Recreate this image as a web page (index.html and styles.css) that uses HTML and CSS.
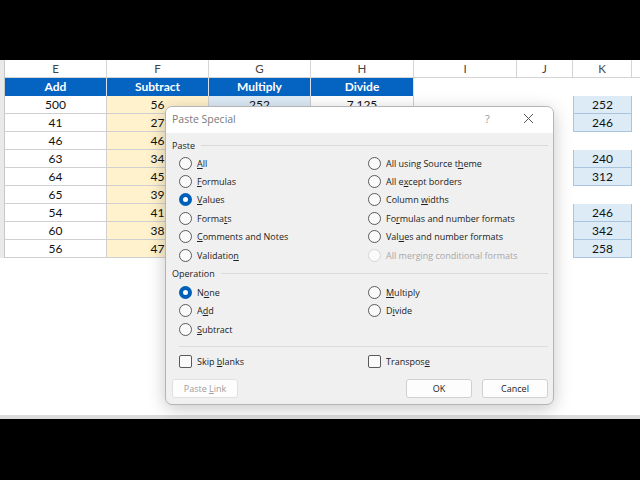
FILE: index.html
```html
<!DOCTYPE html>
<html>
<head>
<meta charset="utf-8">
<link rel="stylesheet" href="styles.css">
</head>
<body>
<div class="screen">
  <div class="sheet">
    <div class="gut hdr"></div>
    <div class="ch">E</div><div class="ch">F</div><div class="ch">G</div><div class="ch">H</div><div class="ch">I</div><div class="ch">J</div><div class="ch">K</div><div class="ch last"></div>

    <div class="gut"></div>
    <div class="t">Add</div><div class="t">Subtract</div><div class="t">Multiply</div><div class="t">Divide</div><div class="e"></div><div class="e"></div><div class="e"></div><div class="e"></div>

    <div class="gut"></div>
    <div class="c">500</div><div class="c y">56</div><div class="c b">252</div><div class="c">7.125</div><div class="e"></div><div class="e"></div><div class="k">252</div><div class="e"></div>
    <div class="gut"></div>
    <div class="c">41</div><div class="c y">27</div><div class="c b"></div><div class="c"></div><div class="e"></div><div class="e"></div><div class="k">246</div><div class="e"></div>
    <div class="gut"></div>
    <div class="c">46</div><div class="c y">46</div><div class="c b"></div><div class="c"></div><div class="e"></div><div class="e"></div><div class="e"></div><div class="e"></div>
    <div class="gut"></div>
    <div class="c">63</div><div class="c y">34</div><div class="c b"></div><div class="c"></div><div class="e"></div><div class="e"></div><div class="k">240</div><div class="e"></div>
    <div class="gut"></div>
    <div class="c">64</div><div class="c y">45</div><div class="c b"></div><div class="c"></div><div class="e"></div><div class="e"></div><div class="k">312</div><div class="e"></div>
    <div class="gut"></div>
    <div class="c">65</div><div class="c y">39</div><div class="c b"></div><div class="c"></div><div class="e"></div><div class="e"></div><div class="e"></div><div class="e"></div>
    <div class="gut"></div>
    <div class="c">54</div><div class="c y">41</div><div class="c b"></div><div class="c"></div><div class="e"></div><div class="e"></div><div class="k">246</div><div class="e"></div>
    <div class="gut"></div>
    <div class="c">60</div><div class="c y">38</div><div class="c b"></div><div class="c"></div><div class="e"></div><div class="e"></div><div class="k">342</div><div class="e"></div>
    <div class="gut"></div>
    <div class="c">56</div><div class="c y">47</div><div class="c b"></div><div class="c"></div><div class="e"></div><div class="e"></div><div class="k">258</div><div class="e"></div>
  </div>
  <div class="tabbar"></div>

  <div class="dialog">
    <div class="titlebar">
      <span class="title">Paste Special</span>
      <span class="help">?</span>
      <span class="close"><svg width="11" height="11" viewBox="0 0 11 11"><path d="M1 1L10 10M10 1L1 10" stroke="#555" stroke-width="1" fill="none"/></svg></span>
    </div>
    <div class="body">
      <div class="group"><span>Paste</span><i></i></div>
      <div class="opts paste">
        <div class="opt"><span class="r"></span><span class="l"><u>A</u>ll</span></div>
        <div class="opt"><span class="r"></span><span class="l">All using Source t<u>h</u>eme</span></div>
        <div class="opt"><span class="r"></span><span class="l"><u>F</u>ormulas</span></div>
        <div class="opt"><span class="r"></span><span class="l">All e<u>x</u>cept borders</span></div>
        <div class="opt"><span class="r on"></span><span class="l"><u>V</u>alues</span></div>
        <div class="opt"><span class="r"></span><span class="l">Column <u>w</u>idths</span></div>
        <div class="opt"><span class="r"></span><span class="l">Forma<u>t</u>s</span></div>
        <div class="opt"><span class="r"></span><span class="l">Fo<u>r</u>mulas and number formats</span></div>
        <div class="opt"><span class="r"></span><span class="l"><u>C</u>omments and Notes</span></div>
        <div class="opt"><span class="r"></span><span class="l">Val<u>u</u>es and number formats</span></div>
        <div class="opt"><span class="r"></span><span class="l">Validatio<u>n</u></span></div>
        <div class="opt dis"><span class="r"></span><span class="l">All merging conditional formats</span></div>
      </div>
      <div class="group op"><span>Operation</span><i></i></div>
      <div class="opts">
        <div class="opt"><span class="r on"></span><span class="l">N<u>o</u>ne</span></div>
        <div class="opt"><span class="r"></span><span class="l"><u>M</u>ultiply</span></div>
        <div class="opt"><span class="r"></span><span class="l">A<u>d</u>d</span></div>
        <div class="opt"><span class="r"></span><span class="l">D<u>i</u>vide</span></div>
        <div class="opt"><span class="r"></span><span class="l"><u>S</u>ubtract</span></div>
        <div class="opt"></div>
      </div>
      <div class="sep"></div>
      <div class="opts checks">
        <div class="opt"><span class="cb"></span><span class="l">Skip <u>b</u>lanks</span></div>
        <div class="opt"><span class="cb"></span><span class="l">Transpos<u>e</u></span></div>
      </div>
      <div class="buttons">
        <div class="btn disabled"><span>Paste <u>L</u>ink</span></div>
        <div class="spacer"></div>
        <div class="btn">OK</div>
        <div class="btn">Cancel</div>
      </div>
    </div>
  </div>
</div>
</body>
</html>
```
FILE: styles.css
```css
html, body { margin: 0; padding: 0; background: #000; }
body { width: 640px; height: 480px; overflow: hidden; }
.screen {
  margin-top: 60px;
  height: 359px;
  background: #fff;
  position: relative;
  overflow: hidden;
  font-family: Lato, "Liberation Sans", sans-serif;
}
.sheet {
  display: grid;
  grid-template-columns: 5px 102px 102px 102px 103px 103px 56px 59px 8px;
  grid-template-rows: 18px 18px repeat(9, 18px);
}
.gut { background: #e9e9e9; border-right: 1px solid #c8c8c8; }
.ch {
  border-right: 1px solid #d4d4d4;
  border-bottom: 1px solid #d4d4d4;
  color: #444;
  font-size: 11.5px;
  text-align: center;
  line-height: 18px;
  background: #fff;
}
.ch.last { border-right: none; }
.t {
  background: #0563c1;
  color: #fff;
  font-weight: bold;
  font-size: 12px;
  text-align: center;
  line-height: 18px;
  border-right: 1px solid #d9e1ea;
}
.c {
  border-right: 1px solid #d0d0d0;
  border-bottom: 1px solid #d0d0d0;
  font-size: 12px;
  text-align: center;
  line-height: 17px;
  color: #111;
}
.y { background: #fff2cc; }
.b { background: #ddebf7; }
.k {
  background: #ddebf7;
  border: 1px solid #a9c4df;
  border-top: none;
  font-size: 12px;
  text-align: center;
  line-height: 17px;
  color: #111;
}
.tabbar {
  position: absolute;
  left: 0; right: 0; bottom: 0;
  height: 4px;
  background: #dcdcdc;
}
.dialog {
  position: absolute;
  left: 165px;
  top: 46px;
  width: 389px;
  height: 299px;
  border: 1px solid #b5b5b5;
  border-radius: 7px;
  background: #f0f0f0;
  box-shadow: 0 4px 18px rgba(0,0,0,0.22);
  overflow: hidden;
  font-family: "Open Sans", "Noto Sans", sans-serif;
  font-size: 9px;
  color: #222;
  box-sizing: border-box;
}
.titlebar {
  height: 26px;
  background: #fff;
  display: flex;
  align-items: center;
  padding-left: 6px;
}
.title { font-size: 10.5px; color: #7a7a7a; flex: 1; margin-top: -3px; }
.help { color: #999; font-size: 11px; width: 38px; margin-top: -3px; }
.close { width: 20px; margin-right: 10px; display: flex; align-items: center; margin-top: -3px; }
.body { padding: 4px 5px 0 6px; }
.group { display: flex; align-items: center; gap: 6px; height: 16px; }
.group span { color: #222; }
.group i { flex: 1; height: 1px; background: #dadada; }
.opts {
  display: grid;
  grid-template-columns: 189px 1fr;
  grid-auto-rows: 18.4px;
  padding-left: 7px;
  margin-top: 1px;
}
.opt { display: flex; align-items: center; gap: 5px; white-space: nowrap; }
.opt u { text-decoration: underline; text-underline-offset: 1px; }
.opt.dis { color: #a8a8a8; }
.r {
  width: 11px; height: 11px;
  border: 1px solid #5a5a5a;
  border-radius: 50%;
  background: #fafafa;
  box-sizing: content-box;
  flex: none;
}
.r.on {
  background: #fff;
  border: 4px solid #005fb8;
  width: 5px; height: 5px;
}
.dis .r { border-color: #d5d5d5; }
.opts.paste + .group { margin-top: 1px; }
.opts + .group + .opts { margin-top: 2px; }
.sep { height: 1px; background: #dcdcdc; margin: 7px 0 6px 7px; }
.cb {
  width: 11px; height: 11px;
  border: 1px solid #5a5a5a;
  border-radius: 2px;
  background: #fafafa;
  flex: none;
}
.buttons { display: flex; gap: 10px; margin-top: 8px; }
.spacer { flex: 1; }
.btn {
  width: 66px; height: 19px;
  background: #fdfdfd;
  border: 1px solid #d0d0d0;
  border-radius: 3px;
  display: flex; align-items: center; justify-content: center;
  box-sizing: border-box;
  color: #222;
}
.btn.disabled { color: #a0a0a0; border-color: #e0e0e0; }
```
